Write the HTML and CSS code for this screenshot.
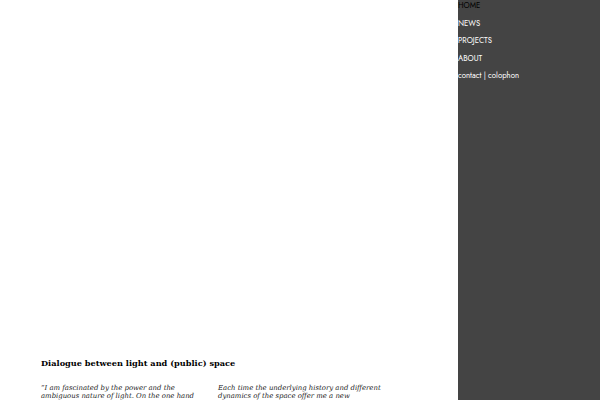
FILE: index.html
```html
<!DOCTYPE html>
<html>
<head>
<meta charset="utf-8">
<link rel="stylesheet" href="styles.css">
</head>
<body>
<div class="page">
  <main class="main">
    <section class="intro">
      <h1 class="title">Dialogue between light and (public) space</h1>
      <div class="cols">
        <p class="col">“I am fascinated by the power and the ambiguous nature of light. On the one hand light is something immaterial, on the other hand it can shape and transform a space completely.</p>
        <p class="col">Each time the underlying history and different dynamics of the space offer me a new perspective for a dialogue between light and space.</p>
      </div>
    </section>
  </main>
  <nav class="side">
    <a class="nav-item active" href="#">HOME</a>
    <a class="nav-item" href="#">NEWS</a>
    <a class="nav-item" href="#">PROJECTS</a>
    <a class="nav-item" href="#">ABOUT</a>
    <a class="nav-item" href="#">contact | colophon</a>
  </nav>
</div>
</body>
</html>
```
FILE: styles.css
```css
html, body {
  margin: 0;
  padding: 0;
  height: 100%;
  overflow: hidden;
  background: #fff;
}
.page {
  display: flex;
  height: 400px;
  width: 600px;
  overflow: hidden;
}
.main {
  width: 458px;
  flex: none;
}
.intro {
  padding: 357px 0 0 41px;
}
.title {
  font-family: "DejaVu Serif", serif;
  font-weight: bold;
  font-size: 8.2px;
  line-height: 12px;
  margin: 0 0 15px 0;
  color: #000;
}
.cols {
  display: flex;
  gap: 10px;
}
.col {
  width: 167px;
  margin: 0;
  font-family: "DejaVu Serif", serif;
  font-style: italic;
  font-size: 6.9px;
  line-height: 8px;
  color: #222;
}
.side {
  flex: 1;
  background: #444444;
  display: flex;
  flex-direction: column;
  padding-top: 1px;
}
.nav-item {
  font-family: "Jost", "Lato", "Open Sans", sans-serif;
  font-size: 7.8px;
  line-height: 10px;
  height: 17.6px;
  color: #fff;
  text-decoration: none;
}
.nav-item.active {
  color: #000;
}
```
